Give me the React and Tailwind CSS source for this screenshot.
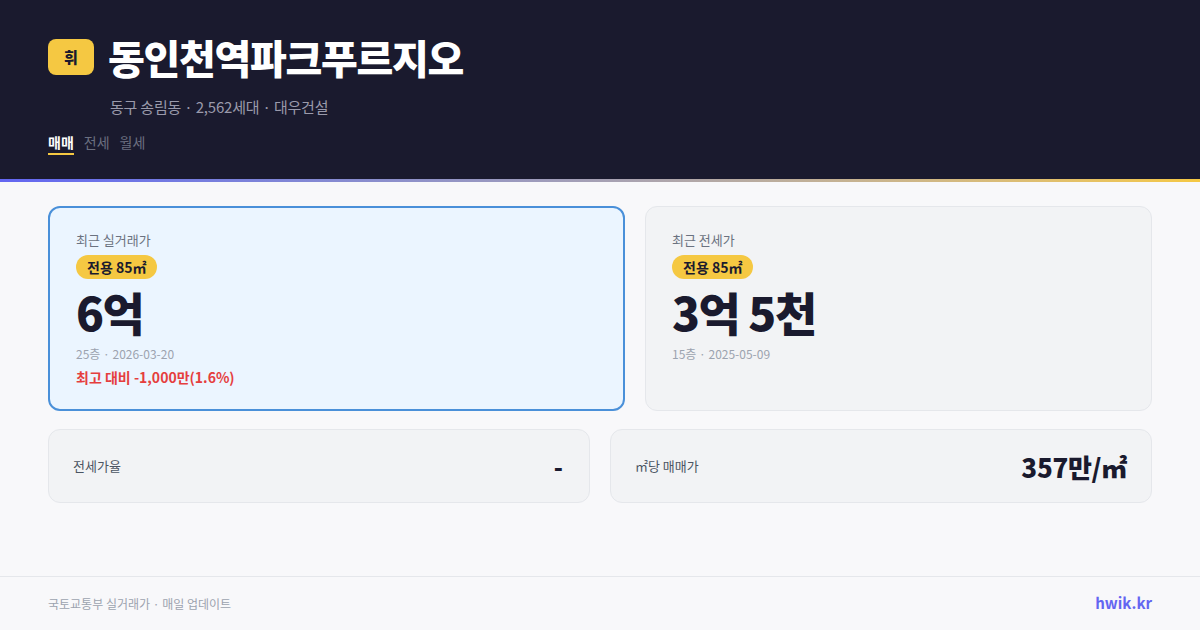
export default function App() {
  const font = { fontFamily: '"Noto Sans CJK KR", "Noto Sans", sans-serif' };
  return (
    <div className="w-[1200px] h-[630px] flex flex-col bg-[#f8f8fa] overflow-hidden" style={font}>
      <header className="bg-[#1a1a2e] px-12 pt-[34px] pb-[24px]">
        <div className="flex items-center gap-[14px] h-[46px]">
          <div className="w-[46px] h-[36px] rounded-[8px] bg-[#f5c842] flex items-center justify-center text-[15px] font-black text-[#1a1a2e]">휘</div>
          <h1 className="text-[40px] leading-[46px] font-black tracking-[-1.3px] text-white">동인천역파크푸르지오</h1>
        </div>
        <div className="mt-[17px] pl-[62px] text-[15px] leading-[20px] tracking-[-0.2px] text-[#9a9aab]">동구 송림동 · 2,562세대 · 대우건설</div>
        <div className="mt-[16px] flex gap-[10px] text-[14px] leading-[18px]">
          <span className="font-bold text-white pb-[2px] border-b-2 border-[#f5c842]">매매</span>
          <span className="text-[#6b6f80] pb-[2px]">전세</span>
          <span className="text-[#6b6f80] pb-[2px]">월세</span>
        </div>
      </header>
      <div className="h-[3px] bg-gradient-to-r from-[#6366f1] to-[#f5c842]" />
      <main className="flex-1 px-12 pt-[24px]">
        <div className="flex gap-[20px]">
          <div className="w-[577px] rounded-[12px] border-2 border-[#4a90d9] bg-[#ebf5ff] px-[26px] pt-[23px] pb-[22px]">
            <div className="text-[13px] leading-[18px] text-[#6b7280]">최근 실거래가</div>
            <div className="mt-[6px] inline-block rounded-full bg-[#f5c842] px-[11px] h-[24px] leading-[24px] text-[14px] font-bold text-[#1a1a2e]">전용 85㎡</div>
            <div className="mt-[4px] text-[46px] leading-[56px] font-black tracking-[-1.5px] text-[#1a1a2e]">6억</div>
            <div className="mt-[6px] text-[12px] leading-[18px] text-[#9ca3af]">25층 · 2026-03-20</div>
            <div className="mt-[4px] text-[14px] leading-[20px] font-bold text-[#e53e3e]">최고 대비 -1,000만(1.6%)</div>
          </div>
          <div className="flex-1 rounded-[12px] border border-[#e5e7eb] bg-[#f2f3f5] px-[26px] pt-[24px] pb-[22px]">
            <div className="text-[13px] leading-[18px] text-[#6b7280]">최근 전세가</div>
            <div className="mt-[6px] inline-block rounded-full bg-[#f5c842] px-[11px] h-[24px] leading-[24px] text-[14px] font-bold text-[#1a1a2e]">전용 85㎡</div>
            <div className="mt-[4px] text-[46px] leading-[56px] font-black tracking-[-1.5px] text-[#1a1a2e]">3억 5천</div>
            <div className="mt-[6px] text-[12px] leading-[18px] text-[#9ca3af]">15층 · 2025-05-09</div>
          </div>
        </div>
        <div className="mt-[18px] grid grid-cols-2 gap-[20px]">
          <div className="h-[74px] rounded-[12px] border border-[#e5e7eb] bg-[#f2f3f5] px-6 flex items-center justify-between">
            <span className="text-[13px] text-[#4b5563]">전세가율</span>
            <span className="text-[24px] font-black text-[#1a1a2e] pr-[2px]">-</span>
          </div>
          <div className="h-[74px] rounded-[12px] border border-[#e5e7eb] bg-[#f2f3f5] px-6 flex items-center justify-between">
            <span className="text-[13px] text-[#4b5563]">㎡당 매매가</span>
            <span className="text-[26px] font-black tracking-[-0.3px] text-[#1a1a2e]">357만/㎡</span>
          </div>
        </div>
      </main>
      <footer className="h-[54px] border-t border-[#e5e7eb] px-12 flex items-center justify-between">
        <span className="text-[12px] text-[#9ca3af]">국토교통부 실거래가 · 매일 업데이트</span>
        <span className="text-[15px] font-bold text-[#6366f1]">hwik.kr</span>
      </footer>
    </div>
  );
}
